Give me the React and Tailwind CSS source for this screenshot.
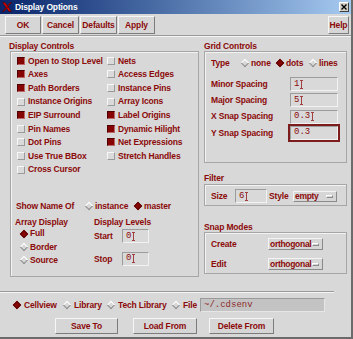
import React from "react"

// Motif style toggle / radio bits
function Check({ on }) {
  return (
    <span
      className={`w-[8px] h-[8px] shrink-0 border ${
        on
          ? "bg-[#860404] border-t-[#4e0000] border-l-[#4e0000] border-b-[#b86a6a] border-r-[#b86a6a]"
          : "bg-[#dadada] border-t-[#f7f7f7] border-l-[#f7f7f7] border-b-[#9a9a9a] border-r-[#9a9a9a]"
      }`}
    />
  )
}

function Dia({ on }) {
  return (
    <span className="w-[9px] h-[9px] shrink-0 flex items-center justify-center">
      <span
        className={`w-[6px] h-[6px] rotate-45 border ${
          on
            ? "bg-[#860404] border-[#5e0000]"
            : "bg-[#d8d8d8] border-t-white border-l-white border-b-[#8c8c8c] border-r-[#8c8c8c]"
        }`}
      />
    </span>
  )
}

function Caret() {
  return (
    <svg width="3" height="9" viewBox="0 0 3 9" className="ml-[1px]">
      <path d="M0 0.5h3M1.5 0.5v8M0 8.5h3" stroke="#a04040" strokeWidth="1" fill="none" />
    </svg>
  )
}

function Field({ value, caret, w, focus }) {
  return (
    <div
      className={`${w} h-[14px] shrink-0 flex items-center pl-[3px] bg-[#d9d9d9] border border-t-[#9c9c9c] border-l-[#9c9c9c] border-b-[#f2f2f2] border-r-[#f2f2f2] font-['Liberation_Mono',monospace] font-normal tracking-normal text-[9px] text-[#8b0a0a] ${
        focus ? "outline-2 outline-[#7c1c1c]" : ""
      }`}
    >
      <span>{value}</span>
      {caret && <Caret />}
    </div>
  )
}

function Option({ label, w, h }) {
  return (
    <div
      className={`${w} ${h} shrink-0 flex items-center pl-[1px] pr-[3px] bg-[#d6d6d6] border border-t-[#f4f4f4] border-l-[#f4f4f4] border-b-[#8a8a8a] border-r-[#8a8a8a]`}
    >
      <span className="tracking-[-0.3px]">{label}</span>
      <span className="ml-auto w-[7px] h-[3px] shrink-0 border border-t-white border-l-white border-b-[#8a8a8a] border-r-[#8a8a8a]" />
    </div>
  )
}

function Btn({ children, w, h = "h-[18px]" }) {
  return (
    <div
      className={`${w} ${h} shrink-0 flex items-center justify-center bg-[#d6d6d6] border border-t-[#f6f6f6] border-l-[#f6f6f6] border-b-[#7c7c7c] border-r-[#7c7c7c]`}
    >
      {children}
    </div>
  )
}

const leftChecks = [
  ["Open to Stop Level", true, "Nets", false],
  ["Axes", true, "Access Edges", false],
  ["Path Borders", true, "Instance Pins", false],
  ["Instance Origins", false, "Array Icons", false],
  ["EIP Surround", true, "Label Origins", true],
  ["Pin Names", false, "Dynamic Hilight", true],
  ["Dot Pins", false, "Net Expressions", true],
  ["Use True BBox", false, "Stretch Handles", false],
  ["Cross Cursor", false, null, false],
]

const box = "border border-[#a6a6a6] shadow-[inset_1px_1px_0_#f3f3f3]"

export default function App() {
  return (
    <div className="w-[353px] h-[339px] bg-[#d8d8d8] border-r-2 border-b-2 border-[#6b6b6b] font-['Liberation_Sans',Arial,sans-serif] text-[8.5px] tracking-[-0.15px] leading-none font-bold whitespace-nowrap text-[#8b0a0a] overflow-hidden flex flex-col">
      {/* title bar */}
      <div className="h-[14px] shrink-0 flex items-center bg-linear-to-r from-[#0a246a] to-[#a6caf0]">
        <svg width="10" height="10" viewBox="0 0 10 10" className="ml-[2px]">
          <path d="M0.5 0.5h2.6l6.4 9h-2.6z" fill="#d40000" stroke="#300000" strokeWidth="0.5" />
          <path d="M9.5 0.5h-1.4l-7.6 9h1.4z" fill="#d40000" stroke="#300000" strokeWidth="0.5" />
        </svg>
        <span className="ml-[3px] text-white">Display Options</span>
        <div className="ml-auto mr-[2px] w-[10px] h-[10px] flex items-center justify-center bg-[#d4d0c8] border border-t-white border-l-white border-b-[#404040] border-r-[#404040]">
          <svg width="6" height="6" viewBox="0 0 6 6">
            <path d="M0.5 0.5l5 5M5.5 0.5l-5 5" stroke="#000" strokeWidth="1.4" />
          </svg>
        </div>
      </div>

      {/* top buttons */}
      <div className="h-[22px] shrink-0 flex items-start pt-[2px] pl-[5px] border-b border-[#9a9a9a]">
        <div className="flex gap-[1px]">
          <Btn w="w-[36px]">OK</Btn>
          <Btn w="w-[37px]">Cancel</Btn>
          <Btn w="w-[37px]">Defaults</Btn>
          <Btn w="w-[37px]">Apply</Btn>
        </div>
        <div className="ml-auto mr-[2px]">
          <Btn w="w-[21px]">Help</Btn>
        </div>
      </div>
      <div className="h-px shrink-0 bg-[#f4f4f4]" />

      {/* main */}
      <div className="h-[252px] shrink-0 flex">
        {/* left */}
        <div className="ml-[10px] w-[189px] pt-[4px]">
          <div className="h-[10px] flex items-center -ml-[1px]">Display Controls</div>
          <div className={`h-[226px] ${box} pt-[2px]`}>
            <div className="grid grid-cols-[90px_1fr] auto-rows-[13.6px] pl-[6px]">
              {leftChecks.map(([a, aOn, b, bOn], i) => (
                <React.Fragment key={i}>
                  <div className="flex items-center gap-[3px]">
                    <Check on={aOn} />
                    <span>{a}</span>
                  </div>
                  <div className="flex items-center gap-[3px]">
                    {b && <Check on={bOn} />}
                    {b && <span>{b}</span>}
                  </div>
                </React.Fragment>
              ))}
            </div>

            <div className="mt-[22.6px] h-[14px] flex items-center pl-[5px]">
              <span className="w-[68px]">Show Name Of</span>
              <Dia on={false} />
              <span className="ml-[2px] w-[38px]">instance</span>
              <Dia on={true} />
              <span className="ml-[2px]">master</span>
            </div>

            <div className="mt-[5px] flex">
              <div className="w-[83px] pl-[4px]">
                <div className="h-[9px] flex items-center">Array Display</div>
                {[
                  ["Full", true],
                  ["Border", false],
                  ["Source", false],
                ].map(([t, on]) => (
                  <div key={t} className="h-[13.3px] flex items-center pl-[4px]">
                    <Dia on={on} />
                    <span className="ml-[2px]">{t}</span>
                  </div>
                ))}
              </div>
              <div>
                <div className="h-[9px] flex items-center">Display Levels</div>
                <div className="mt-[3px] h-[13px] flex items-center">
                  <span className="w-[28px]">Start</span>
                  <Field value="0" caret w="w-[27px]" />
                </div>
                <div className="mt-[9px] h-[14px] flex items-center">
                  <span className="w-[28px]">Stop</span>
                  <Field value="0" caret w="w-[27px]" />
                </div>
              </div>
            </div>
          </div>
        </div>

        {/* right */}
        <div className="ml-[5px] w-[143px] pt-[4px]">
          <div className="h-[10px] flex items-center">Grid Controls</div>
          <div className={`h-[112px] ${box} pl-[6px] pt-[4px]`}>
            <div className="h-[14px] flex items-center">
              <span className="w-[29px]">Type</span>
              <Dia on={false} />
              <span className="ml-[2px] w-[24px]">none</span>
              <Dia on={true} />
              <span className="ml-[2px] w-[22px]">dots</span>
              <Dia on={false} />
              <span className="ml-[2px]">lines</span>
            </div>
            <div className="mt-[7px] flex flex-col gap-[2.33px]">
              {[
                ["Minor Spacing", "1", true, false],
                ["Major Spacing", "5", true, false],
                ["X Snap Spacing", "0.3", true, false],
                ["Y Snap Spacing", "0.3", false, true],
              ].map(([l, v, c, f]) => (
                <div key={l} className="h-[14px] flex items-center">
                  <span className="w-[79px]">{l}</span>
                  <Field value={v} caret={c} focus={f} w="w-[48px]" />
                </div>
              ))}
            </div>
          </div>

          <div className="mt-[10px] h-[10px] flex items-center">Filter</div>
          <div className={`mt-[1px] h-[22px] ${box} pl-[6px] pt-[4px]`}>
            <div className="h-[14px] flex items-center">
              <span className="w-[24px]">Size</span>
              <Field value="6" caret w="w-[32px]" />
              <span className="ml-[2px] w-[24px]">Style</span>
              <Option label="empty" w="w-[44px]" h="h-[11px]" />
            </div>
          </div>

          <div className="mt-[16px] h-[10px] flex items-center">Snap Modes</div>
          <div className={`h-[42px] ${box} pl-[6px] pt-[5px]`}>
            <div className="h-[12px] flex items-center">
              <span className="w-[57px]">Create</span>
              <Option label="orthogonal" w="w-[55px]" h="h-[12px]" />
            </div>
            <div className="mt-[8px] h-[12px] flex items-center">
              <span className="w-[57px]">Edit</span>
              <Option label="orthogonal" w="w-[55px]" h="h-[12px]" />
            </div>
          </div>
        </div>
      </div>

      {/* separator */}
      <div className="mt-[2px] w-[334px] h-[2px] shrink-0 border-t border-b border-t-[#9a9a9a] border-b-[#f4f4f4]" />

      {/* source row */}
      <div className="mt-[5px] h-[14px] shrink-0 flex items-center pl-[12px]">
        <div className="w-[50px] flex items-center">
          <Dia on={true} />
          <span className="ml-[3px]">Cellview</span>
        </div>
        <div className="w-[44px] flex items-center">
          <Dia on={false} />
          <span className="ml-[3px]">Library</span>
        </div>
        <div className="w-[65px] flex items-center">
          <Dia on={false} />
          <span className="ml-[3px]">Tech Library</span>
        </div>
        <div className="w-[29px] flex items-center">
          <Dia on={false} />
          <span className="ml-[3px]">File</span>
        </div>
        <div className="w-[125px] h-[14px] flex items-center pl-[3px] bg-[#c3c3c3] border border-t-[#9a9a9a] border-l-[#9a9a9a] border-b-[#e6e6e6] border-r-[#e6e6e6] font-['Liberation_Mono',monospace] font-normal tracking-normal text-[9px] text-[#8b2a2a]">
          ~/.cdsenv
        </div>
      </div>

      {/* bottom buttons */}
      <div className="mt-[6px] h-[16px] shrink-0 flex pl-[55px]">
        <Btn w="w-[63px]" h="h-[16px]">Save To</Btn>
        <div className="ml-[15px]">
          <Btn w="w-[64px]" h="h-[16px]">Load From</Btn>
        </div>
        <div className="ml-[12px]">
          <Btn w="w-[65px]" h="h-[16px]">Delete From</Btn>
        </div>
      </div>
    </div>
  )
}
